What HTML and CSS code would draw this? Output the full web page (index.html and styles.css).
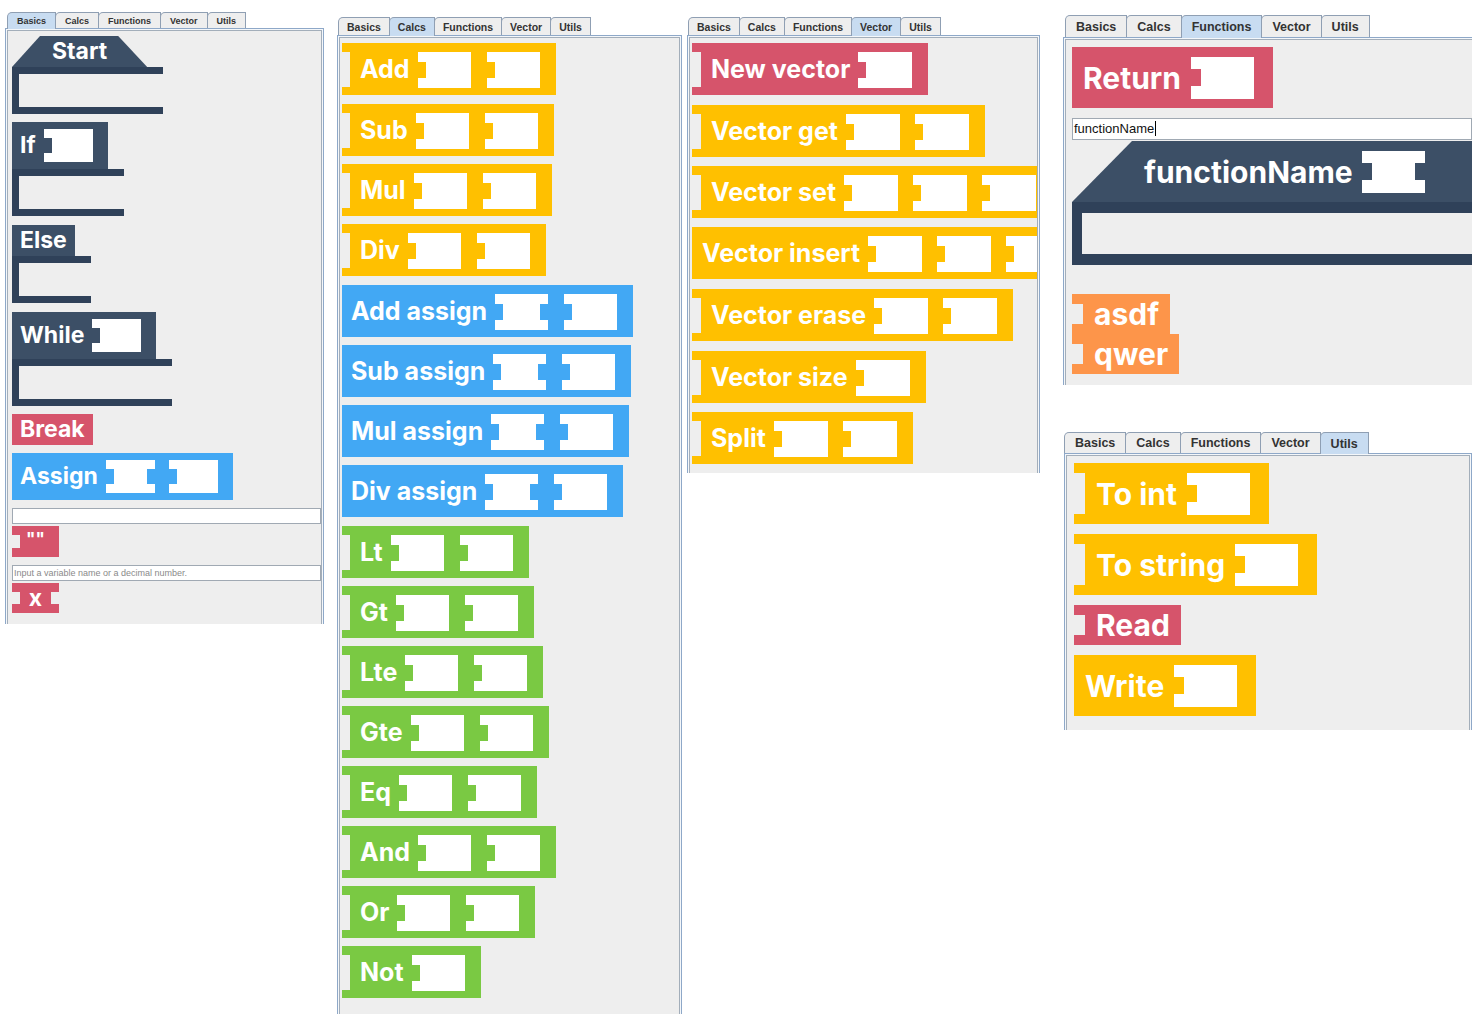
FILE: index.html
```html
<!DOCTYPE html>
<html lang="en">
<head>
    <meta charset="UTF-8">
    <title>Block palette</title>
    <link rel="stylesheet" href="styles.css">
</head>
<body>
<div class="board">

    <!-- Basics -->
    <div class="col col-basics">
        <div class="panel sc1 p-basics">
            <div class="tabs">
                <span class="tab on">Basics</span>
                <span class="tab">Calcs</span>
                <span class="tab">Functions</span>
                <span class="tab">Vector</span>
                <span class="tab">Utils</span>
            </div>
            <div class="pane">
                <div class="pane-in">
                    <div class="stmt">
                        <div class="blk navy hat"><span class="lbl">Start</span></div>
                        <div class="cbody"></div>
                    </div>
                    <div class="stmt">
                        <div class="blk navy"><span class="lbl">If</span><span class="slot"></span></div>
                        <div class="cbody"></div>
                    </div>
                    <div class="stmt nudge">
                        <div class="blk navy"><span class="lbl">Else</span></div>
                        <div class="cbody"></div>
                    </div>
                    <div class="stmt nudge">
                        <div class="blk navy"><span class="lbl">While</span><span class="slot"></span></div>
                        <div class="cbody"></div>
                    </div>
                    <div class="blk red"><span class="lbl">Break</span></div>
                    <div class="blk blue"><span class="lbl">Assign</span><span class="slot var"></span><span class="slot"></span></div>
                    <div class="pair">
                        <div class="field"></div>
                        <div class="blk red val mini quote"><span class="lbl">""</span></div>
                    </div>
                    <div class="pair">
                        <div class="field hint">Input a variable name or a decimal number.</div>
                        <div class="blk red val both mini"><span class="lbl">x</span></div>
                    </div>
                </div>
            </div>
        </div>
    </div>

    <!-- Calcs -->
    <div class="col col-calcs">
        <div class="panel sc2 p-calcs">
            <div class="tabs">
                <span class="tab">Basics</span>
                <span class="tab on">Calcs</span>
                <span class="tab">Functions</span>
                <span class="tab">Vector</span>
                <span class="tab">Utils</span>
            </div>
            <div class="pane">
                <div class="pane-in">
                    <div class="blk yellow val"><span class="lbl">Add</span><span class="slot"></span><span class="slot"></span></div>
                    <div class="blk yellow val nudge"><span class="lbl">Sub</span><span class="slot"></span><span class="slot"></span></div>
                    <div class="blk yellow val"><span class="lbl">Mul</span><span class="slot"></span><span class="slot"></span></div>
                    <div class="blk yellow val"><span class="lbl">Div</span><span class="slot"></span><span class="slot"></span></div>
                    <div class="blk blue nudge"><span class="lbl">Add assign</span><span class="slot var"></span><span class="slot"></span></div>
                    <div class="blk blue"><span class="lbl">Sub assign</span><span class="slot var"></span><span class="slot"></span></div>
                    <div class="blk blue"><span class="lbl">Mul assign</span><span class="slot var"></span><span class="slot"></span></div>
                    <div class="blk blue"><span class="lbl">Div assign</span><span class="slot var"></span><span class="slot"></span></div>
                    <div class="blk green val nudge"><span class="lbl">Lt</span><span class="slot"></span><span class="slot"></span></div>
                    <div class="blk green val"><span class="lbl">Gt</span><span class="slot"></span><span class="slot"></span></div>
                    <div class="blk green val"><span class="lbl">Lte</span><span class="slot"></span><span class="slot"></span></div>
                    <div class="blk green val"><span class="lbl">Gte</span><span class="slot"></span><span class="slot"></span></div>
                    <div class="blk green val"><span class="lbl">Eq</span><span class="slot"></span><span class="slot"></span></div>
                    <div class="blk green val"><span class="lbl">And</span><span class="slot"></span><span class="slot"></span></div>
                    <div class="blk green val"><span class="lbl">Or</span><span class="slot"></span><span class="slot"></span></div>
                    <div class="blk green val"><span class="lbl">Not</span><span class="slot"></span></div>
                </div>
            </div>
        </div>
    </div>

    <!-- Vector -->
    <div class="col col-vector">
        <div class="panel sc2 p-vector">
            <div class="tabs">
                <span class="tab">Basics</span>
                <span class="tab">Calcs</span>
                <span class="tab">Functions</span>
                <span class="tab on">Vector</span>
                <span class="tab">Utils</span>
            </div>
            <div class="pane">
                <div class="pane-in">
                    <div class="blk red val"><span class="lbl">New vector</span><span class="slot"></span></div>
                    <div class="blk yellow val nudge"><span class="lbl">Vector get</span><span class="slot"></span><span class="slot"></span></div>
                    <div class="blk yellow val"><span class="lbl">Vector set</span><span class="slot"></span><span class="slot"></span><span class="slot"></span></div>
                    <div class="blk yellow wide"><span class="lbl">Vector insert</span><span class="slot"></span><span class="slot"></span><span class="slot"></span></div>
                    <div class="blk yellow val nudge"><span class="lbl">Vector erase</span><span class="slot"></span><span class="slot"></span></div>
                    <div class="blk yellow val nudge"><span class="lbl">Vector size</span><span class="slot"></span></div>
                    <div class="blk yellow val"><span class="lbl">Split</span><span class="slot"></span><span class="slot"></span></div>
                </div>
            </div>
        </div>
    </div>

    <!-- Functions + Utils -->
    <div class="col col-side">
        <div class="panel sc3 p-funcs">
            <div class="tabs">
                <span class="tab">Basics</span>
                <span class="tab">Calcs</span>
                <span class="tab on">Functions</span>
                <span class="tab">Vector</span>
                <span class="tab">Utils</span>
            </div>
            <div class="pane open">
                <div class="pane-in">
                    <div class="blk red"><span class="lbl">Return</span><span class="slot"></span></div>
                    <div class="field name">functionName<span class="caret"></span></div>
                    <div class="stmt full">
                        <div class="blk navy hat-fn"><span class="lbl">functionName</span><span class="slot var"></span></div>
                        <div class="cbody"></div>
                    </div>
                    <div class="blk orange val vars"><span class="lbl">asdf</span></div>
                    <div class="blk orange val"><span class="lbl">qwer</span></div>
                </div>
            </div>
        </div>

        <div class="panel sc3 p-utils">
            <div class="tabs">
                <span class="tab">Basics</span>
                <span class="tab">Calcs</span>
                <span class="tab">Functions</span>
                <span class="tab">Vector</span>
                <span class="tab on">Utils</span>
            </div>
            <div class="pane">
                <div class="pane-in">
                    <div class="blk yellow val"><span class="lbl">To int</span><span class="slot"></span></div>
                    <div class="blk yellow val"><span class="lbl">To string</span><span class="slot"></span></div>
                    <div class="blk red val"><span class="lbl">Read</span></div>
                    <div class="blk yellow"><span class="lbl">Write</span><span class="slot"></span></div>
                </div>
            </div>
        </div>
    </div>

</div>
</body>
</html>
```

FILE: styles.css
```css
* {
    box-sizing: border-box;
}

html,
body {
    margin: 0;
    background: #fff;
}

body {
    width: 1483px;
    height: 1026px;
    overflow: hidden;
    font-family: Inter, "Noto Sans", sans-serif;
}

.board {
    display: flex;
    align-items: flex-start;
    padding-left: 5px;
}

.col {
    display: flex;
    flex-direction: column;
    flex: none;
}

.col-basics { width: 319px; margin-top: 12px; }
.col-calcs  { width: 345px; margin-left: 13px; margin-top: 17px; }
.col-vector { width: 353px; margin-left: 5px; margin-top: 17px; }
.col-side   { width: 409px; margin-left: 23px; margin-top: 15px; }

/* scale presets: each screenshot was taken at its own size */
.sc1 {
    --tfs: 9px; --th: 16px; --tp: 9px;
    --fs: 23px; --h: 31px; --pad: 8px; --vp: 8px;
    --nw: 8px; --nt: 9px; --nb: 9px;
    --sw: 49px; --sh: 33px; --smt: 7px; --smb: 7px;
    --g1: 8px; --g2: 14px; --px: 7px;
    --snw: 8px; --st: 9px; --sb: 9px;
    --ct: 7px; --cl: 7px; --cb: 7px; --ci: 33px;
    --gap: 8px;
}

.sc2 {
    --tfs: 10.5px; --th: 18px; --tp: 8px;
    --fs: 25px; --h: 36px; --pad: 9px; --vp: 10px;
    --nw: 8px; --nt: 9px; --nb: 8px;
    --sw: 53px; --sh: 36px; --smt: 9px; --smb: 7px;
    --g1: 8px; --g2: 16px; --px: 7px;
    --snw: 8px; --st: 10px; --sb: 10px;
    --gap: 8px;
}

.sc3 {
    --tfs: 12.5px; --th: 22px; --tp: 10px;
    --fs: 30px; --h: 40px; --pad: 11px; --vp: 11px;
    --nw: 11px; --nt: 10px; --nb: 10px;
    --sw: 63px; --sh: 42px; --smt: 10px; --smb: 9px;
    --g1: 10px; --g2: 16px; --px: 8px;
    --snw: 10px; --st: 12px; --sb: 13px;
    --ct: 11px; --cl: 10px; --cb: 11px; --ci: 41px;
    --gap: 10px;
}

.p-vector {
    --sw: 54px;
    --g2: 15px;
    --nw: 9px;
    --gap: 9px;
}

/* the original stack is not perfectly even */
.nudge {
    margin-top: 1px;
}

/* tabbed pane */
.panel {
    display: flex;
    flex-direction: column;
}

.tabs {
    display: flex;
    align-items: flex-end;
    padding-left: 1px;
}

.tab {
    display: flex;
    align-items: center;
    justify-content: center;
    height: var(--th);
    padding: 0 var(--tp);
    margin-right: -1px;
    font-family: "Liberation Sans", Arial, sans-serif;
    font-size: var(--tfs);
    font-weight: 700;
    color: #333;
    background: #eee;
    border: 1px solid #8f9fb3;
    border-bottom: 0;
    border-top-left-radius: 5px;
}

.tab.on {
    position: relative;
    z-index: 1;
    height: calc(var(--th) + 1px);
    margin-bottom: -1px;
    background: #c8dcf1;
}

.pane {
    display: flex;
    flex-direction: column;
    padding: 1px 1px 0;
    background: #f4f7fa;
    border: 1px solid #8ea8c8;
    border-bottom: 0;
}

.pane.open {
    border-right: 0;
    padding-right: 0;
}

.pane-in {
    flex: 1;
    display: flex;
    flex-direction: column;
    align-items: flex-start;
    gap: var(--gap);
    overflow: hidden;
    background: #eee;
    border: 1px solid #a3aeba;
    border-bottom: 0;
}

.pane.open .pane-in {
    border-right: 0;
}

.p-basics .tabs { padding-left: 2px; }
.p-basics .pane { height: 596px; }
.p-basics .pane-in { padding: 5px 0 0 4px; }

.p-calcs .pane { height: 979px; }
.p-calcs .pane-in { padding: 5px 0 0 2px; }

.p-vector .pane { height: 438px; }
.p-vector .pane-in { padding: 5px 0 0 2px; }

.p-funcs .tabs { padding-left: 2px; }
.p-funcs .pane { height: 348px; }
.p-funcs .pane-in { padding: 7px 0 0 6px; gap: 0; }

.p-utils { margin-top: 47px; margin-left: 1px; }
.p-utils .tabs { --th: 21px; padding-left: 0; }
.p-utils .pane { height: 277px; }
.p-utils .pane-in { padding: 7px 0 0 7px; }

/* blocks */
.navy   { --c: #3c4f66; }
.red    { --c: #d6546b; }
.yellow { --c: #ffc000; }
.blue   { --c: #42a8f4; }
.green  { --c: #7ac943; }
.orange { --c: #fd954a; }

.blk {
    position: relative;
    display: inline-flex;
    align-items: center;
    flex: none;
    padding: 0 var(--pad);
    background: var(--c);
    color: #fff;
    font-size: var(--fs);
    font-weight: 700;
    white-space: nowrap;
}

.lbl {
    line-height: var(--h);
}

.val {
    padding-left: calc(var(--nw) + var(--vp));
}

.val::before,
.val.both::after {
    content: "";
    position: absolute;
    left: 0;
    top: var(--nt);
    bottom: var(--nb);
    width: var(--nw);
    background: #eee;
}

.val.both::after {
    left: auto;
    right: 0;
}

.blk.wide {
    padding-left: 10px;
}

.mini {
    width: 47px;
    height: 30px;
    justify-content: center;
    padding: 0;
}

.quote {
    height: 31px;
    align-items: flex-start;
    font-size: 17px;
}

.quote .lbl {
    line-height: 27px;
}

.slot {
    position: relative;
    flex: none;
    width: var(--sw);
    height: var(--sh);
    margin: var(--smt) 0 var(--smb) var(--g1);
    background: #fff;
}

.slot + .slot {
    margin-left: var(--g2);
}

.slot:last-child {
    margin-right: var(--px);
}

.slot::before,
.slot.var::after {
    content: "";
    position: absolute;
    left: 0;
    top: var(--st);
    bottom: var(--sb);
    width: var(--snw);
    background: var(--c);
}

.slot.var::after {
    left: auto;
    right: 0;
}

/* statements with a body */
.stmt {
    display: flex;
    flex-direction: column;
    flex: none;
}

.stmt > .blk {
    align-self: flex-start;
    margin-right: 16px;
}

.cbody {
    height: calc(var(--ct) + var(--ci) + var(--cb));
    border-style: solid;
    border-color: #2f4159;
    border-width: var(--ct) 0 var(--cb) var(--cl);
}

.hat {
    justify-content: center;
    padding: 0 40px;
    clip-path: polygon(28px 0, calc(100% - 29px) 0, 100% 100%, 0 100%);
}

.stmt.full {
    align-self: stretch;
    margin-top: 1px;
}

.stmt.full > .blk {
    align-self: stretch;
    margin-right: 0;
}

.hat-fn {
    padding-left: 72px;
    clip-path: polygon(60px 0, 100% 0, 100% 100%, 0 100%);
}

.hat-fn .slot {
    margin-left: 9px;
}

/* text fields */
.pair {
    display: flex;
    flex-direction: column;
    align-items: flex-start;
    align-self: stretch;
    gap: 2px;
}

.field {
    align-self: stretch;
    height: 16px;
    padding-left: 1px;
    background: #fff;
    border: 1px solid #a0a9b3;
    font-family: "Liberation Sans", Arial, sans-serif;
    font-size: 9px;
    line-height: 14px;
    color: #333;
}

.field.hint {
    color: #8a8a8a;
}

.field.name {
    height: 22px;
    margin-top: 10px;
    font-size: 13px;
    line-height: 20px;
    color: #111;
}

.caret {
    display: inline-block;
    width: 1px;
    height: 15px;
    margin-left: 1px;
    vertical-align: -3px;
    background: #000;
}

.vars {
    margin-top: 29px;
}
```
